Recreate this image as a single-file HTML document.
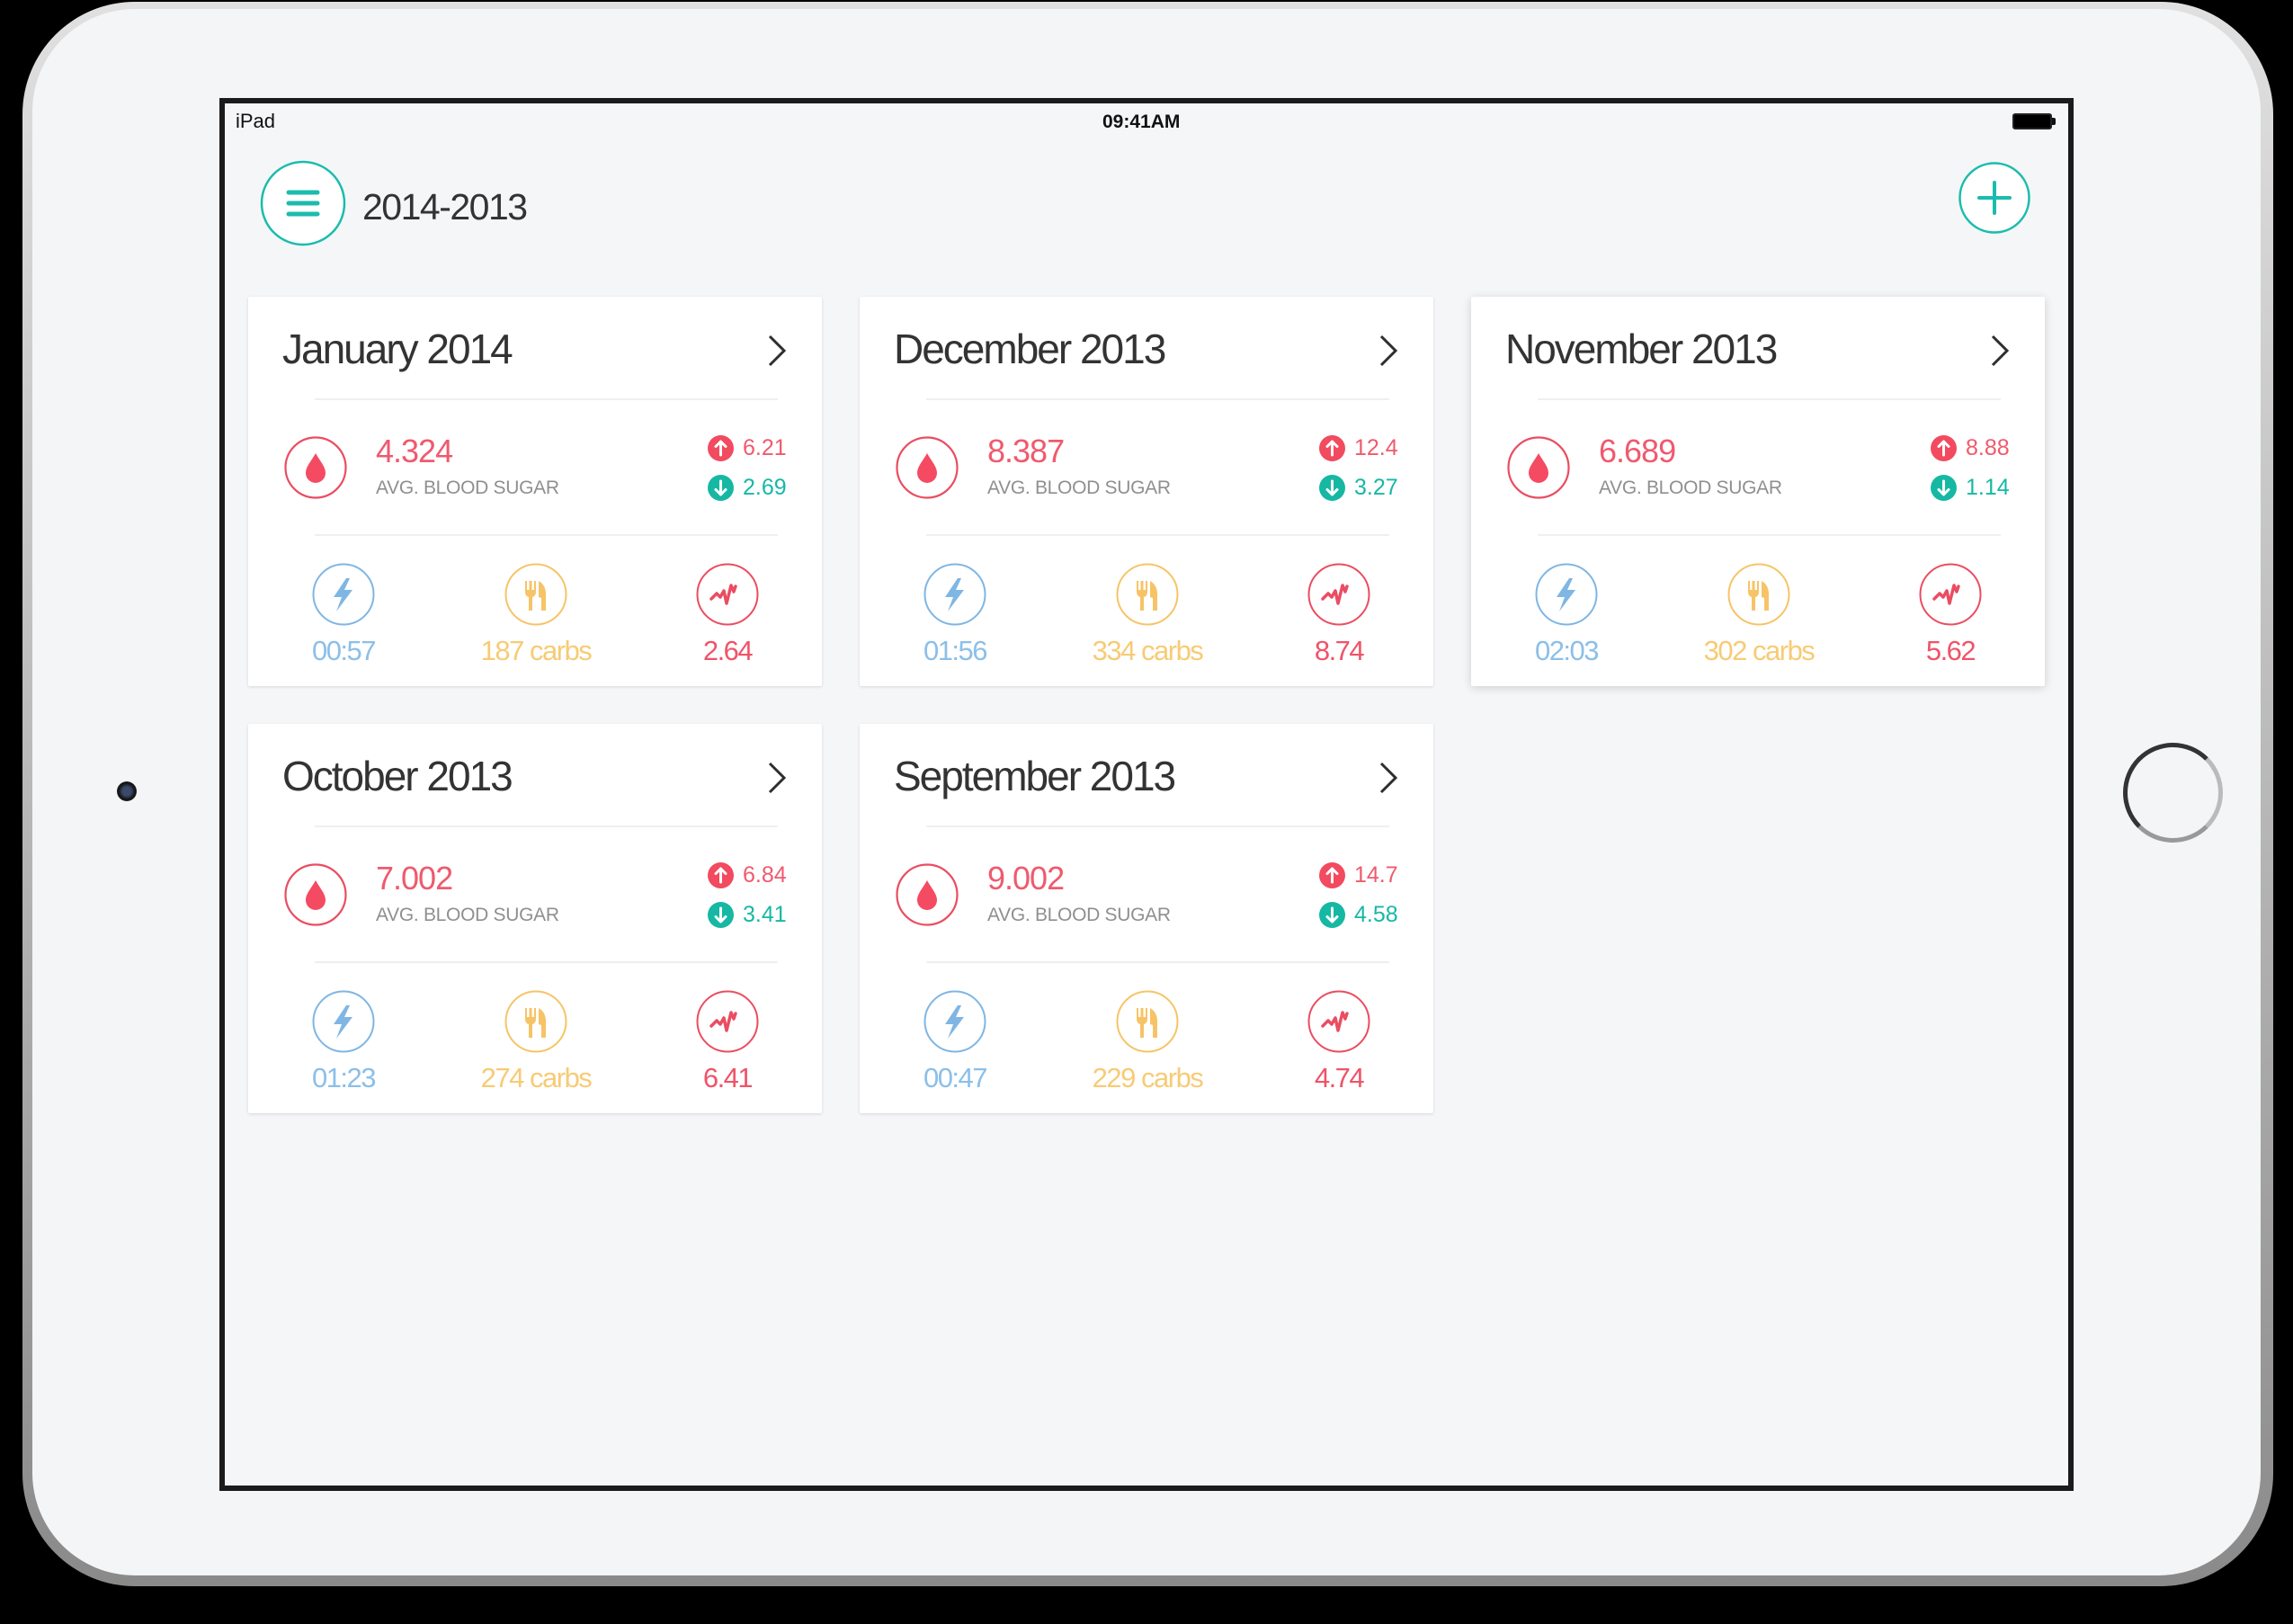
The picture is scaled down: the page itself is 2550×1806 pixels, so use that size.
<!DOCTYPE html>
<html><head><meta charset="utf-8"><style>
*{margin:0;padding:0;box-sizing:border-box}
body{width:2550px;height:1806px;background:#000;position:relative;overflow:hidden;font-family:"Liberation Sans",sans-serif}
.abs{position:absolute}
.dev{left:25px;top:2px;width:2503px;height:1762px;border-radius:125px;background:linear-gradient(180deg,#e0e0e0,#b8b8b8 50%,#8a8a8a);}
.face{left:36px;top:10px;width:2478px;height:1742px;border-radius:114px;background:#f4f5f6;}
.scr{left:244px;top:109px;width:2062px;height:1549px;border:6px solid #1b1b1b;background:#f5f6f7;}
.card{position:absolute;width:638px;height:433px;background:#fff;box-shadow:0 1px 3px rgba(0,0,0,.13);border-radius:2px}
.card .t{position:absolute;left:38px;top:35px;font-size:46px;line-height:46px;color:#333;letter-spacing:-2px;white-space:nowrap}
.card .chev{position:absolute;left:576px;top:42px}
.card .hr{position:absolute;left:74px;width:515px;height:2px;background:#efefef}
.card .drop{position:absolute;left:40px;top:155px}
.card .v{position:absolute;left:142px;top:154px;font-size:36px;line-height:36px;color:#ef5a6e;letter-spacing:-1px}
.card .l{position:absolute;left:142px;top:202px;font-size:21px;line-height:21px;color:#8f8f8f;letter-spacing:-.3px}
.card .bu{position:absolute;left:511px;top:154px}
.card .bd{position:absolute;left:511px;top:198px}
.card .nu{position:absolute;left:550px;top:156px;font-size:25px;line-height:25px;color:#ef5a6e}
.card .nd{position:absolute;left:550px;top:200px;font-size:25px;line-height:25px;color:#17b8a5}
.card .ic{position:absolute;top:296px}
.card .lb{position:absolute;top:378px;width:240px;text-align:center;font-size:31px;line-height:31px;letter-spacing:-1.5px}
</style></head><body>
<div class="abs dev"></div>
<div class="abs face"></div>
<div class="abs" style="left:130px;top:869px;width:22px;height:22px;border-radius:50%;background:radial-gradient(circle,#3a4a6a 0 30%,#111 60%,#555 100%)"></div>
<div class="abs" style="left:2361px;top:826px;width:111px;height:111px;border-radius:50%;border:5px solid #333;border-right-color:#bbb;border-bottom-color:#999"></div>
<div class="abs scr"></div>

<div class="abs" style="left:262px;top:124px;font-size:22px;line-height:22px;color:#111">iPad</div>
<div class="abs" style="left:1226px;top:125px;font-size:21px;line-height:21px;color:#111;font-weight:bold">09:41AM</div>
<div class="abs" style="left:2238px;top:126px;width:44px;height:18px;border:2px solid #222;border-radius:3px;background:#000"></div>
<div class="abs" style="left:2282px;top:131px;width:4px;height:8px;background:#111;border-radius:0 2px 2px 0"></div>

<svg class="abs" style="left:289px;top:178px" width="96" height="96"><circle cx="48" cy="48" r="46" fill="#fff" stroke="#1bbcad" stroke-width="2.5"/><g stroke="#1bbcad" stroke-width="5" stroke-linecap="round"><line x1="32" y1="36" x2="64" y2="36"/><line x1="32" y1="48" x2="64" y2="48"/><line x1="32" y1="60" x2="64" y2="60"/></g></svg>
<div class="abs" style="left:403px;top:210px;font-size:41px;line-height:41px;color:#333;letter-spacing:-1.5px">2014-2013</div>
<svg class="abs" style="left:2178px;top:180px" width="80" height="80"><circle cx="40" cy="40" r="38.5" fill="#fff" stroke="#1bbcad" stroke-width="2.5"/><g stroke="#1bbcad" stroke-width="4" stroke-linecap="round"><line x1="23" y1="40" x2="57" y2="40"/><line x1="40" y1="23" x2="40" y2="57"/></g></svg>

<svg width="0" height="0" style="position:absolute"><defs>
<g id="chev"><path d="M4 2 L20 18 L4 34" fill="none" stroke="#2e2e2e" stroke-width="3"/></g>
<g id="drop"><circle cx="35" cy="35" r="33.5" fill="#fff" stroke="#ea4d61" stroke-width="2.2"/><path d="M35 19 C30 28 24 34 24 41 A11 11 0 0 0 46 41 C46 34 40 28 35 19Z" fill="#f44b62"/></g>
<g id="up"><circle cx="14.5" cy="14.5" r="14.5" fill="#f24a5f"/><path d="M14.5 7 L14.5 22 M9 12.5 L14.5 7 L20 12.5" stroke="#fff" stroke-width="3" fill="none" stroke-linecap="round" stroke-linejoin="round"/></g>
<g id="dn"><circle cx="14.5" cy="14.5" r="14.5" fill="#16b8a3"/><path d="M14.5 7 L14.5 22 M9 16.5 L14.5 22 L20 16.5" stroke="#fff" stroke-width="3" fill="none" stroke-linecap="round" stroke-linejoin="round"/></g>
<g id="bolt"><circle cx="35" cy="35" r="33.5" fill="#fff" stroke="#7fb6e4" stroke-width="2"/><path d="M38 17 L24 38 L33 38 L27 54 L45 30 L36 30 L42 17Z" fill="#7fb6e4"/></g>
<g id="fork"><circle cx="35" cy="35" r="33.5" fill="#fff" stroke="#f6c467" stroke-width="2"/><path d="M23 20 L23 32 Q23 37 27 38 L27 53 L31 53 L31 38 Q35 37 35 32 L35 20 L33 20 L33 30 L30.5 30 L30.5 20 L27.5 20 L27.5 30 L25 30 L25 20Z M38 20 Q47 25 46 38 L46 53 L41 53 L41 39 L38 38Z" fill="#f6c467"/></g>
<g id="pulse"><circle cx="35" cy="35" r="33.5" fill="#fff" stroke="#ea4d61" stroke-width="2"/><path d="M17 40 L23 34 L27 38 L31 31 L34 45 L39 25 L42 32 L44 26" fill="none" stroke="#ea4d61" stroke-width="3.5" stroke-linecap="round" stroke-linejoin="round"/></g>
</defs></svg>

<div class="card" style="left:276px;top:330px">
<div class="t">January 2014</div><svg class="chev" width="24" height="36"><use href="#chev"/></svg>
<div class="hr" style="top:113px"></div>
<svg class="drop" width="70" height="70"><use href="#drop"/></svg>
<div class="v">4.324</div><div class="l">AVG. BLOOD SUGAR</div>
<svg class="bu" width="29" height="29"><use href="#up"/></svg><div class="nu">6.21</div>
<svg class="bd" width="29" height="29"><use href="#dn"/></svg><div class="nd">2.69</div>
<div class="hr" style="top:264px"></div>
<svg class="ic" style="left:71px" width="70" height="70"><use href="#bolt"/></svg>
<svg class="ic" style="left:285px" width="70" height="70"><use href="#fork"/></svg>
<svg class="ic" style="left:498px" width="70" height="70"><use href="#pulse"/></svg>
<div class="lb" style="left:-14px;color:#8cbfe8">00:57</div>
<div class="lb" style="left:200px;color:#f7cb75">187 carbs</div>
<div class="lb" style="left:413px;color:#ef5468">2.64</div>
</div>

<div class="card" style="left:956px;top:330px">
<div class="t">December 2013</div><svg class="chev" width="24" height="36"><use href="#chev"/></svg>
<div class="hr" style="top:113px"></div>
<svg class="drop" width="70" height="70"><use href="#drop"/></svg>
<div class="v">8.387</div><div class="l">AVG. BLOOD SUGAR</div>
<svg class="bu" width="29" height="29"><use href="#up"/></svg><div class="nu">12.4</div>
<svg class="bd" width="29" height="29"><use href="#dn"/></svg><div class="nd">3.27</div>
<div class="hr" style="top:264px"></div>
<svg class="ic" style="left:71px" width="70" height="70"><use href="#bolt"/></svg>
<svg class="ic" style="left:285px" width="70" height="70"><use href="#fork"/></svg>
<svg class="ic" style="left:498px" width="70" height="70"><use href="#pulse"/></svg>
<div class="lb" style="left:-14px;color:#8cbfe8">01:56</div>
<div class="lb" style="left:200px;color:#f7cb75">334 carbs</div>
<div class="lb" style="left:413px;color:#ef5468">8.74</div>
</div>

<div class="card" style="left:1636px;top:330px;box-shadow:0 2px 10px rgba(0,0,0,.16)">
<div class="t">November 2013</div><svg class="chev" width="24" height="36"><use href="#chev"/></svg>
<div class="hr" style="top:113px"></div>
<svg class="drop" width="70" height="70"><use href="#drop"/></svg>
<div class="v">6.689</div><div class="l">AVG. BLOOD SUGAR</div>
<svg class="bu" width="29" height="29"><use href="#up"/></svg><div class="nu">8.88</div>
<svg class="bd" width="29" height="29"><use href="#dn"/></svg><div class="nd">1.14</div>
<div class="hr" style="top:264px"></div>
<svg class="ic" style="left:71px" width="70" height="70"><use href="#bolt"/></svg>
<svg class="ic" style="left:285px" width="70" height="70"><use href="#fork"/></svg>
<svg class="ic" style="left:498px" width="70" height="70"><use href="#pulse"/></svg>
<div class="lb" style="left:-14px;color:#8cbfe8">02:03</div>
<div class="lb" style="left:200px;color:#f7cb75">302 carbs</div>
<div class="lb" style="left:413px;color:#ef5468">5.62</div>
</div>

<div class="card" style="left:276px;top:805px">
<div class="t">October 2013</div><svg class="chev" width="24" height="36"><use href="#chev"/></svg>
<div class="hr" style="top:113px"></div>
<svg class="drop" width="70" height="70"><use href="#drop"/></svg>
<div class="v">7.002</div><div class="l">AVG. BLOOD SUGAR</div>
<svg class="bu" width="29" height="29"><use href="#up"/></svg><div class="nu">6.84</div>
<svg class="bd" width="29" height="29"><use href="#dn"/></svg><div class="nd">3.41</div>
<div class="hr" style="top:264px"></div>
<svg class="ic" style="left:71px" width="70" height="70"><use href="#bolt"/></svg>
<svg class="ic" style="left:285px" width="70" height="70"><use href="#fork"/></svg>
<svg class="ic" style="left:498px" width="70" height="70"><use href="#pulse"/></svg>
<div class="lb" style="left:-14px;color:#8cbfe8">01:23</div>
<div class="lb" style="left:200px;color:#f7cb75">274 carbs</div>
<div class="lb" style="left:413px;color:#ef5468">6.41</div>
</div>

<div class="card" style="left:956px;top:805px">
<div class="t">September 2013</div><svg class="chev" width="24" height="36"><use href="#chev"/></svg>
<div class="hr" style="top:113px"></div>
<svg class="drop" width="70" height="70"><use href="#drop"/></svg>
<div class="v">9.002</div><div class="l">AVG. BLOOD SUGAR</div>
<svg class="bu" width="29" height="29"><use href="#up"/></svg><div class="nu">14.7</div>
<svg class="bd" width="29" height="29"><use href="#dn"/></svg><div class="nd">4.58</div>
<div class="hr" style="top:264px"></div>
<svg class="ic" style="left:71px" width="70" height="70"><use href="#bolt"/></svg>
<svg class="ic" style="left:285px" width="70" height="70"><use href="#fork"/></svg>
<svg class="ic" style="left:498px" width="70" height="70"><use href="#pulse"/></svg>
<div class="lb" style="left:-14px;color:#8cbfe8">00:47</div>
<div class="lb" style="left:200px;color:#f7cb75">229 carbs</div>
<div class="lb" style="left:413px;color:#ef5468">4.74</div>
</div>
</body></html>
